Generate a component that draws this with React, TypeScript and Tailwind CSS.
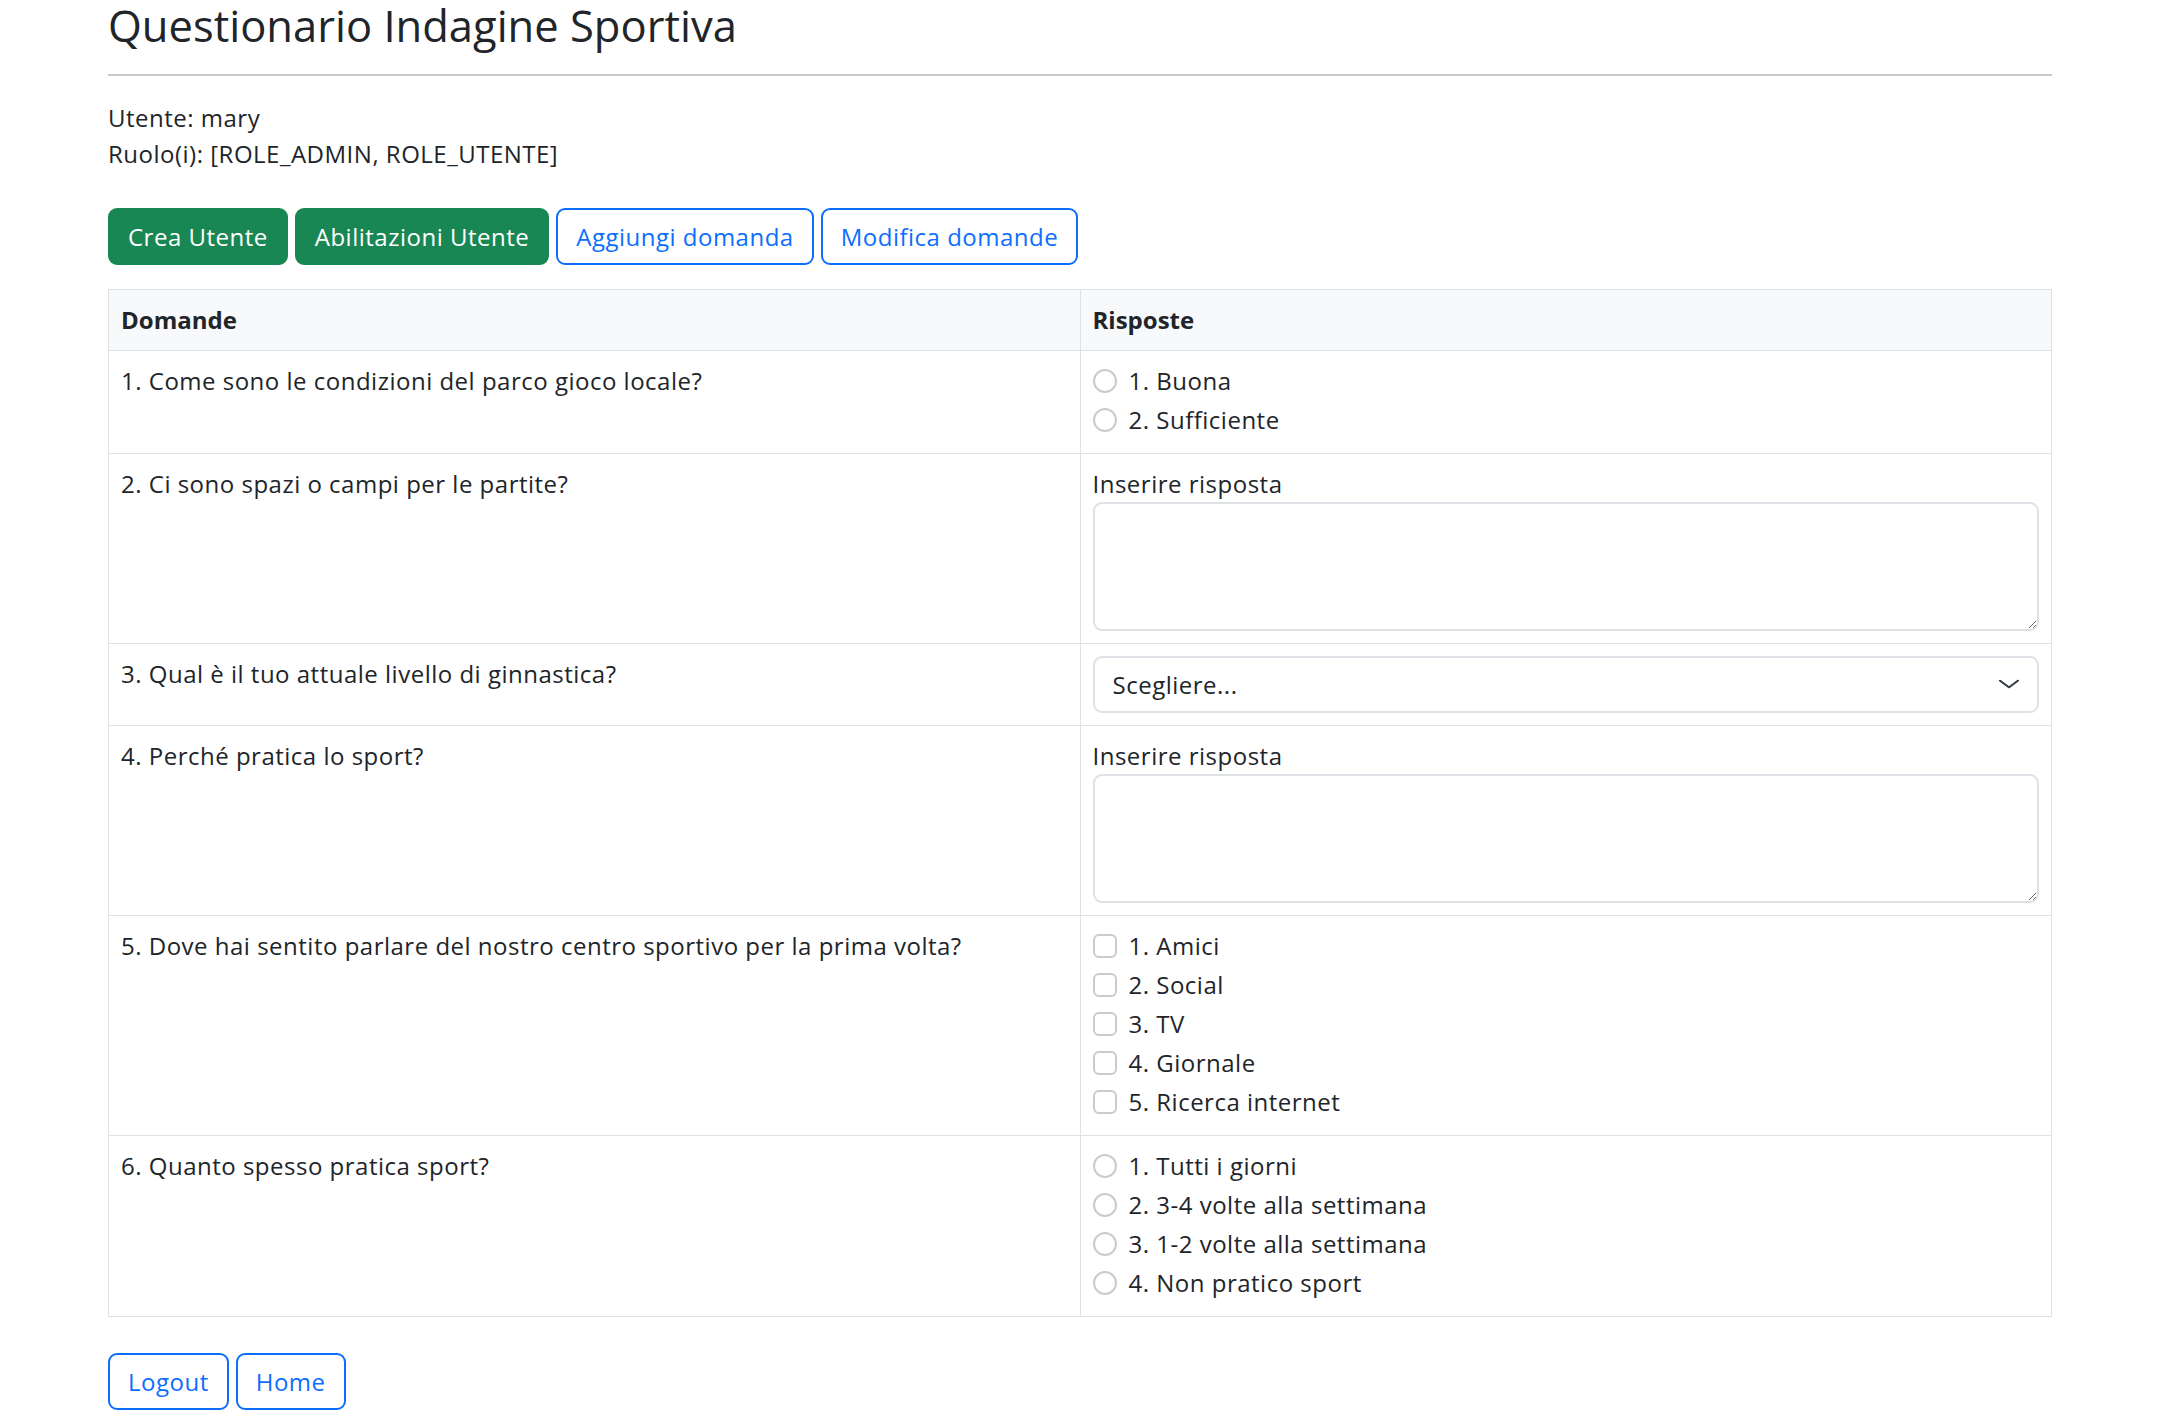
import React from 'react';

type Question =
    | { id: number; text: string; kind: 'radio' | 'checkbox'; options: string[] }
    | { id: number; text: string; kind: 'textarea' | 'select' };

const questions: Question[] = [
    { id: 1, text: '1. Come sono le condizioni del parco gioco locale?', kind: 'radio', options: ['1. Buona', '2. Sufficiente'] },
    { id: 2, text: '2. Ci sono spazi o campi per le partite?', kind: 'textarea' },
    { id: 3, text: '3. Qual è il tuo attuale livello di ginnastica?', kind: 'select' },
    { id: 4, text: '4. Perché pratica lo sport?', kind: 'textarea' },
    {
        id: 5,
        text: '5. Dove hai sentito parlare del nostro centro sportivo per la prima volta?',
        kind: 'checkbox',
        options: ['1. Amici', '2. Social', '3. TV', '4. Giornale', '5. Ricerca internet'],
    },
    {
        id: 6,
        text: '6. Quanto spesso pratica sport?',
        kind: 'radio',
        options: ['1. Tutti i giorni', '2. 3-4 volte alla settimana', '3. 1-2 volte alla settimana', '4. Non pratico sport'],
    },
];

function Answer({ q }: { q: Question }) {
    if (q.kind === 'radio' || q.kind === 'checkbox') {
        return (
            <div>
                {q.options.map((opt) => (
                    <label key={opt} className="flex items-start min-h-[36px] mb-[3px]">
                        <input
                            type={q.kind}
                            name={`q${q.id}`}
                            className={`appearance-none w-6 h-6 mt-[6px] shrink-0 bg-white border-2 border-[#cbcbcb] ${
                                q.kind === 'radio' ? 'rounded-full' : 'rounded-[6px]'
                            }`}
                        />
                        <span className="ml-[12px]">{opt}</span>
                    </label>
                ))}
            </div>
        );
    }
    if (q.kind === 'select') {
        return (
            <div className="relative">
                <select className="appearance-none w-full h-[57px] pl-[18px] pr-[54px] bg-white border-2 border-[#dee2e6] rounded-[9px] text-[#212529] tracking-[0.5px] outline-none">
                    <option>Scegliere...</option>
                </select>
                <svg
                    className="absolute right-[18px] top-[19px] w-6 h-[18px] pointer-events-none"
                    viewBox="0 0 16 16"
                    fill="none"
                    preserveAspectRatio="none"
                >
                    <path d="m2 5 6 6 6-6" stroke="#343a40" strokeWidth="1.5" strokeLinecap="round" strokeLinejoin="round" />
                </svg>
            </div>
        );
    }
    return (
        <div>
            <label className="block">Inserire risposta</label>
            <textarea
                rows={3}
                className="block w-full h-[129px] px-[18px] py-[9px] bg-white border-2 border-[#dee2e6] rounded-[9px] outline-none"
            />
        </div>
    );
}

export default function App() {
    return (
        <main className="min-h-screen bg-white text-[#212529] font-['Open_Sans',sans-serif] text-[24px] leading-[36px] tracking-[0.5px]">
            <div className="mx-auto w-[1944px]">
                {/* Header */}
                <h2 className="text-[43.5px] leading-[52px] font-normal tracking-normal">Questionario Indagine Sportiva</h2>
                <div className="mt-[22px] h-[2px] bg-[#c8c9ca]" />

                <div className="mt-[24px]">
                    <p>Utente: mary</p>
                    <p>Ruolo(i): [ROLE_ADMIN, ROLE_UTENTE]</p>
                </div>

                <div className="mt-[36px] flex gap-[7px]">
                    <button className="h-[57px] px-[18px] rounded-[9px] bg-[#198754] border-2 border-[#198754] text-white">
                        Crea Utente
                    </button>
                    <button className="h-[57px] px-[18px] rounded-[9px] bg-[#198754] border-2 border-[#198754] text-white">
                        Abilitazioni Utente
                    </button>
                    <button className="h-[57px] px-[18px] rounded-[9px] bg-white border-2 border-[#0d6efd] text-[#0d6efd]">
                        Aggiungi domanda
                    </button>
                    <button className="h-[57px] px-[18px] rounded-[9px] bg-white border-2 border-[#0d6efd] text-[#0d6efd]">
                        Modifica domande
                    </button>
                </div>

                {/* Questions table */}
                <table className="mt-[24px] w-full table-fixed border-collapse border border-[#dee2e6]">
                    <thead>
                        <tr className="bg-[#f8f9fa]">
                            <th className="w-1/2 p-[12px] text-left font-bold tracking-normal border border-[#dee2e6]">Domande</th>
                            <th className="w-1/2 p-[12px] text-left font-bold tracking-normal border border-[#dee2e6]">Risposte</th>
                        </tr>
                    </thead>
                    <tbody>
                        {questions.map((q) => (
                            <tr key={q.id}>
                                <td className="p-[12px] align-top border border-[#dee2e6]">{q.text}</td>
                                <td className="p-[12px] align-top border border-[#dee2e6]">
                                    <Answer q={q} />
                                </td>
                            </tr>
                        ))}
                    </tbody>
                </table>

                <div className="mt-[36px] flex gap-[7px]">
                    <button className="h-[57px] px-[18px] rounded-[9px] bg-white border-2 border-[#0d6efd] text-[#0d6efd]">
                        Logout
                    </button>
                    <button className="h-[57px] px-[18px] rounded-[9px] bg-white border-2 border-[#0d6efd] text-[#0d6efd]">
                        Home
                    </button>
                </div>
            </div>
        </main>
    );
}
